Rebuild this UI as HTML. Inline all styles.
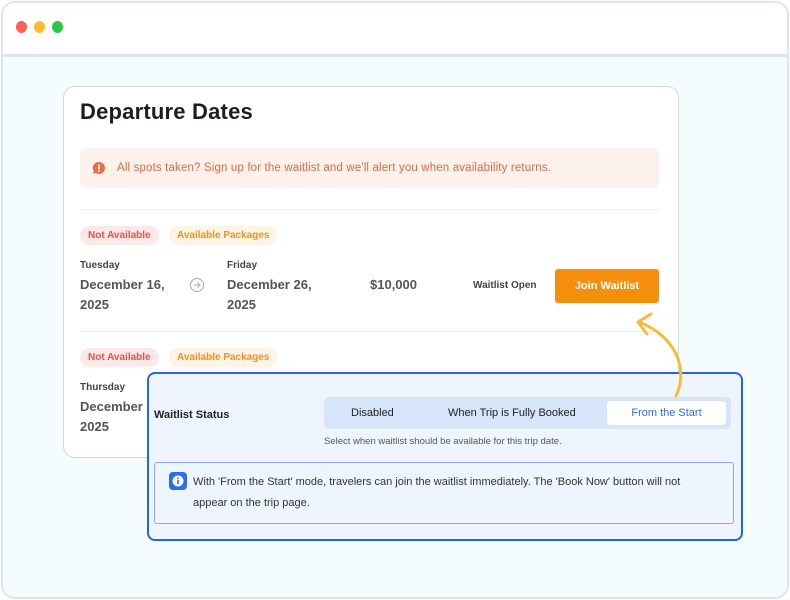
<!DOCTYPE html><html><head><style>
*{margin:0;padding:0;box-sizing:border-box}
body{width:790px;height:600px;background:#fff;font-family:"Liberation Sans",sans-serif;position:relative;overflow:hidden}
.frame{position:absolute;left:1px;top:1px;width:788px;height:598px;border:2px solid #dde6ec;border-radius:14px;background:#f5fcfe;overflow:hidden}
.bar{height:54px;background:#fff;border-bottom:3px solid #dde6ec}
.dot{position:absolute;top:18px;width:11px;height:12px;border-radius:50%}
.card{position:absolute;left:63px;top:86px;width:616px;height:372px;background:#fff;border:1px solid #d6dcc6;border-radius:12px}
.abs{position:absolute}
h1{position:absolute;left:16px;top:12px;font-size:22px;font-weight:bold;color:#1c1f1b;letter-spacing:0.2px}
.alert{position:absolute;left:16px;top:61px;width:579px;height:40px;background:#fdf1ec;border-radius:6px;color:#e26a42;font-size:11.5px;line-height:40px;padding-left:37px;letter-spacing:0.15px}
.hr{position:absolute;left:16px;width:579px;height:1px;background:#eceeed}
.badge{position:absolute;height:19px;border-radius:10px;font-size:10px;font-weight:bold;line-height:19px;padding:0 8px}
.na{background:#fde8e8;color:#e8534d}
.ap{background:#fef4e6;color:#f59212}
.sm{font-size:10px;color:#444;font-weight:bold}
.dt{font-size:13px;color:#555;font-weight:bold;line-height:20px}
.panel{position:absolute;left:147px;top:372px;width:596px;height:169px;border:2px solid #2563eb;border-radius:8px;background:#eef5fe}
.seg{position:absolute;left:175px;top:23px;width:407px;height:32px;background:#d6e5fa;border-radius:5px;font-size:11px;color:#222}
.seg span{position:absolute;top:0;line-height:32px}
.sel{position:absolute;left:283px;top:4px;width:119px;height:24px;background:#fff;border-radius:4px;color:#2b6fe6;text-align:center;line-height:24px;font-size:11px}
.info{position:absolute;left:5px;top:88px;width:580px;height:62px;border:1px solid #86acef;border-radius:3px;font-size:11px;color:#333;line-height:21px;padding:9px 50px 0 38px}
</style></head><body>
<div class="frame">
<div class="bar"></div>
<div class="dot" style="left:13px;background:#fe5f57"></div>
<div class="dot" style="left:31px;background:#febc2e"></div>
<div class="dot" style="left:49px;background:#28c840"></div>
</div>
<div class="card">
<h1>Departure Dates</h1>
<div class="alert">All spots taken? Sign up for the waitlist and we'll alert you when availability returns.</div>
<svg class="abs" style="left:28px;top:74px" width="14" height="14" viewBox="0 0 14 14"><path d="M7 1a6 6 0 1 1-3.5 10.9L1 13l.8-2.8A6 6 0 0 1 7 1z" fill="#ec6a45"/><rect x="6.2" y="3.5" width="1.6" height="5" fill="#fff"/><rect x="6.2" y="9.5" width="1.6" height="1.6" fill="#fff"/></svg>
<div class="hr" style="top:122px"></div>
<div class="badge na" style="left:16px;top:139px">Not Available</div>
<div class="badge ap" style="left:105px;top:139px">Available Packages</div>
<div class="abs sm" style="left:16px;top:173px">Tuesday</div>
<div class="abs dt" style="left:16px;top:188px">December 16,<br>2025</div>
<svg class="abs" style="left:125px;top:190px" width="16" height="16" viewBox="0 0 16 16"><circle cx="8" cy="8" r="6.5" fill="none" stroke="#aab" stroke-width="1"/><path d="M5 8h6M8.5 5.5 11 8l-2.5 2.5" fill="none" stroke="#aab" stroke-width="1"/></svg>
<div class="abs sm" style="left:163px;top:173px">Friday</div>
<div class="abs dt" style="left:163px;top:188px">December 26,<br>2025</div>
<div class="abs dt" style="left:306px;top:188px">$10,000</div>
<div class="abs sm" style="left:409px;top:193px">Waitlist Open</div>
<div class="abs" style="left:491px;top:182px;width:104px;height:34px;background:#f68f0d;border-radius:3px;color:#fff;font-size:11px;font-weight:bold;text-align:center;line-height:34px">Join Waitlist</div>
<div class="hr" style="top:244px"></div>
<div class="badge na" style="left:16px;top:261px">Not Available</div>
<div class="badge ap" style="left:105px;top:261px">Available Packages</div>
<div class="abs sm" style="left:16px;top:295px">Thursday</div>
<div class="abs dt" style="left:16px;top:310px">December<br>2025</div>
</div>
<div class="panel">
<div class="abs" style="left:5px;top:35px;font-size:11px;font-weight:bold;color:#222">Waitlist Status</div>
<div class="seg"><span style="left:27px">Disabled</span><span style="left:124px">When Trip is Fully Booked</span><div class="sel">From the Start</div></div>
<div class="abs" style="left:175px;top:62px;font-size:9.5px;color:#555">Select when waitlist should be available for this trip date.</div>
<div class="info">With 'From the Start' mode, travelers can join the waitlist immediately. The 'Book Now' button will not appear on the trip page.</div>
<svg class="abs" style="left:20px;top:98px" width="18" height="18" viewBox="0 0 18 18"><rect width="18" height="18" rx="4" fill="#2a6ee8"/><circle cx="9" cy="9" r="5.5" fill="#fff"/><rect x="8.2" y="8" width="1.6" height="4" fill="#2a6ee8"/><circle cx="9" cy="6.3" r=".9" fill="#2a6ee8"/></svg>
</div>
<svg class="abs" style="left:625px;top:310px" width="70" height="90" viewBox="0 0 70 90"><path d="M51 86C64 58 50 26 14 12" fill="none" stroke="#f6bb3d" stroke-width="3" stroke-linecap="round"/><path d="M26 4 13 12 22 24" fill="none" stroke="#f6bb3d" stroke-width="3" stroke-linecap="round" stroke-linejoin="round"/></svg>
</body></html>
